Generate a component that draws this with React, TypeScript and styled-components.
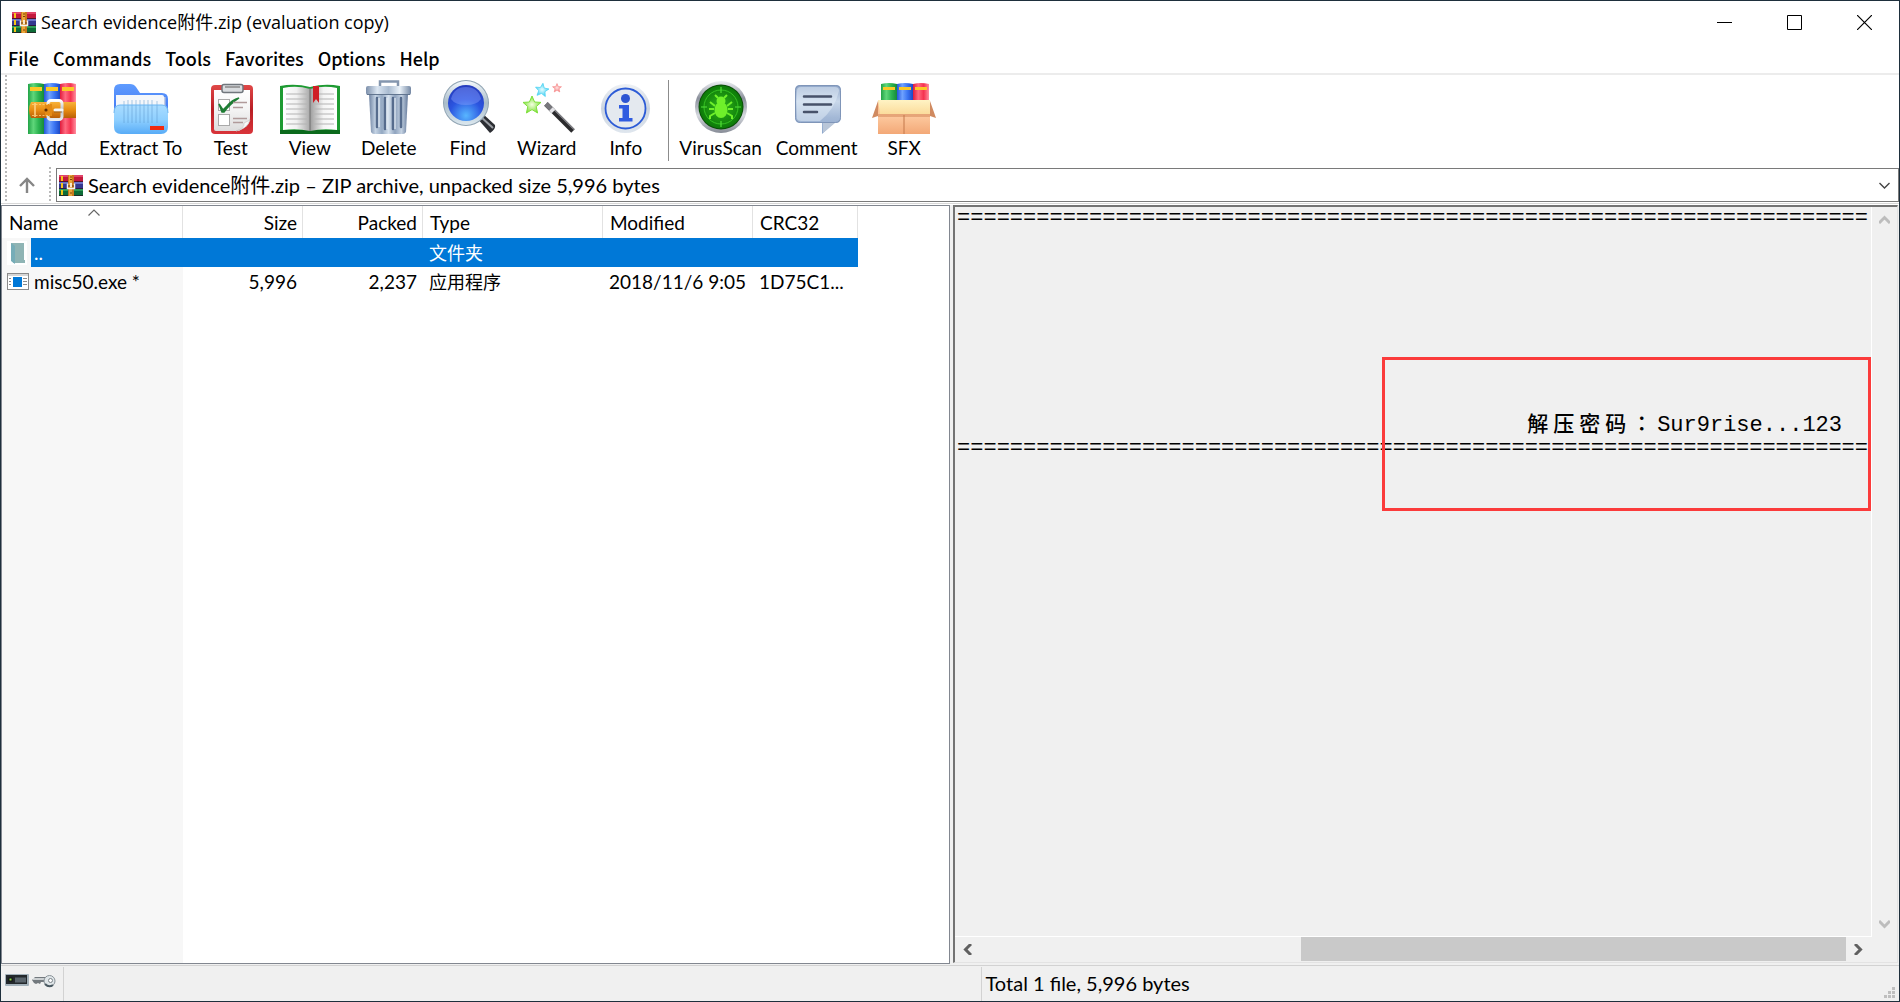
import React from "react";
import styled, { createGlobalStyle } from "styled-components";

const uiFont = `Lato, "Noto Sans CJK SC", sans-serif`;
const menuFont = `"Noto Sans CJK SC", sans-serif`;
const titleFont = `"Open Sans", "Noto Sans CJK SC", sans-serif`;
const monoFont = `"Liberation Mono", "Noto Sans CJK TC", monospace`;

const GlobalStyle = createGlobalStyle`
  * { box-sizing: border-box; }
  body { margin: 0; background: #fff; color: #000; }
  button, select { font: inherit; color: inherit; background: none; border: 0; margin: 0; padding: 0; }
  svg { display: block; flex: none; }
`;

const Window = styled.div`
  display: flex;
  flex-direction: column;
  min-height: 100vh;
  border: 1px solid #1e2f3c;
  background: #fff;
  font-family: ${uiFont};
  font-size: 19px;
`;

const TitleBar = styled.header`
  display: flex;
  align-items: center;
  height: 43px;
  padding-left: 11px;
`;

const Title = styled.h1`
  flex: 1;
  margin: 0;
  padding: 0 0 9px 5px;
  font: 400 18px/26px ${titleFont};
  align-self: flex-end;
`;

const WindowButton = styled.button`
  display: flex;
  align-items: center;
  justify-content: center;
  width: 70px;
  height: 43px;
`;

const MenuBar = styled.nav`
  display: flex;
  height: 31px;
  border-bottom: 2px solid #ececec;
  font: 500 18px/29px ${menuFont};
`;

const MenuItem = styled.button`
  padding: 0 7px;
  height: 29px;
`;

const Rebar = styled.div`
  display: flex;
  padding-left: 4px;
  border-bottom: 1px solid #d8d8d8;
  margin-bottom: 1px;
`;

const Grip = styled.div`
  flex: none;
  width: 2px;
  background: repeating-linear-gradient(#b9b9b9 0 2px, #fff 2px 4px);
`;

const Bands = styled.div`
  flex: 1;
  min-width: 0;
  display: flex;
  flex-direction: column;
`;

const Toolbar = styled.div`
  display: flex;
  align-items: flex-start;
  padding: 5px 4px 6px;
`;

const ToolGroup = styled.div<{ $pad: number }>`
  display: flex;
  button { padding: 0 ${(p) => p.$pad}px; }
`;

const ToolButton = styled.button`
  display: flex;
  flex-direction: column;
  align-items: center;
  gap: 1px;
  min-width: 79px;
  line-height: 26px;
  white-space: nowrap;

  svg { margin: 0 -4px; }
`;

const ToolSeparator = styled.div`
  width: 1px;
  height: 81px;
  margin: 0 3px;
  background: #8c8c8c;
`;

const AddressBand = styled.div`
  display: flex;
  height: 36px;
`;

const UpButton = styled.button`
  display: flex;
  align-items: center;
  justify-content: center;
  width: 42px;
  padding-right: 2px;
`;

const AddressBox = styled.div`
  position: relative;
  flex: 1;
  display: flex;
  align-items: center;
  margin: 1px 0 1px 5px;
  padding-left: 2px;
  border: 1px solid #7a7a7a;
`;

const AddressSelect = styled.select`
  flex: 1;
  height: 32px;
  padding-left: 5px;
  appearance: none;
  font: 400 20px/26px ${uiFont};
`;

const SelectArrow = styled.span`
  position: absolute;
  right: 8px;
  pointer-events: none;
`;

const Panes = styled.main`
  flex: 1;
  display: grid;
  grid-template-columns: minmax(0, 950fr) minmax(0, 945fr);
  gap: 3px;
  background: #f0f0f0;
  padding: 0 1px 1px 0;
`;

const FilePane = styled.section`
  border: 1px solid #828790;
  background: linear-gradient(to right, #f7f7f7 181px, #fff 181px);
`;

const HeaderStrip = styled.div`
  background: linear-gradient(#fff 32px, transparent 32px);
`;

const FileTable = styled.table`
  table-layout: fixed;
  width: 856px;
  border-collapse: separate;
  border-spacing: 0;
`;

const HeadCell = styled.th<{ $width: number; $right?: boolean }>`
  position: relative;
  width: ${(p) => p.$width}px;
  height: 32px;
  padding: 0 5px 0 7px;
  border-right: 1px solid #e2e2e2;
  font-weight: 400;
  text-align: ${(p) => (p.$right ? "right" : "left")};
`;

const SortMark = styled.span`
  position: absolute;
  top: 3px;
  left: 86px;
`;

const FileRow = styled.tr<{ $selected?: boolean }>`
  color: ${(p) => (p.$selected ? "#fff" : "#000")};
  td + td, td:first-child span {
    background: ${(p) => (p.$selected ? "#0078d7" : "transparent")};
  }
`;

const Cell = styled.td<{ $right?: boolean }>`
  height: 29px;
  padding: 0 6px;
  overflow: hidden;
  white-space: nowrap;
  line-height: 28px;
  text-align: ${(p) => (p.$right ? "right" : "left")};
`;

const TypeCell = styled(Cell)`
  font-size: 18px;
`;

const NameCell = styled.td`
  height: 29px;
  padding: 0;
`;

const NameBox = styled.div`
  display: flex;
  align-items: center;
`;

const IconSlot = styled.i`
  display: flex;
  width: 29px;
  padding-left: 5px;
`;

const NameText = styled.span`
  flex: 1;
  padding-left: 3px;
  line-height: 29px;
`;

const CommentPane = styled.section`
  display: grid;
  grid-template-columns: minmax(0, 1fr) 25px;
  grid-template-rows: minmax(0, 1fr) 25px;
  border-style: solid;
  border-width: 2px 1px 1px 2px;
  border-color: #737373 #e3e3e3 #e3e3e3 #737373;
  margin-bottom: 1px;
  background: #f0f0f0;
`;

const CommentView = styled.div`
  position: relative;
  display: flex;
  flex-direction: column;
  align-items: flex-end;
  overflow: hidden;
  border-right: 1px solid #fff;
  border-bottom: 1px solid #fff;
  padding: 0 3px 0 0;
  font: 400 22px/23px ${monoFont};
`;

const CommentLine = styled.div<{ $inset?: boolean }>`
  flex: none;
  display: flex;
  align-items: baseline;
  height: 23px;
  padding-right: ${(p) => (p.$inset ? 26 : 0)}px;
  white-space: pre;
`;

const WideGlyph = styled.span`
  width: 26px;
  font-size: 21px;
  font-weight: 500;
`;

const Highlight = styled.div`
  position: absolute;
  top: 150px;
  right: 0;
  width: 489px;
  height: 154px;
  border: 3px solid #fb3b3b;
`;

const VScroll = styled.div`
  display: flex;
  flex-direction: column;
  justify-content: space-between;
  align-items: center;
`;

const HScroll = styled.div`
  display: flex;
  padding-right: 1px;
`;

const ScrollButton = styled.button`
  display: flex;
  align-items: center;
  justify-content: center;
  width: 25px;
  height: 25px;
`;

const Track = styled.div`
  flex: 1;
  display: flex;
  justify-content: flex-end;
`;

const Thumb = styled.div`
  width: 63%;
  height: 24px;
  background: #c9c9c9;
`;

const StatusBar = styled.footer`
  display: grid;
  grid-template-columns: 63px minmax(0, 917fr) minmax(0, 917fr);
  height: 36px;
  padding-top: 1px;
  border-top: 1px solid #d2d2d2;
  background: #f0f0f0;
  font-size: 20px;
  line-height: 33px;
`;

const StatusPart = styled.div<{ $divider?: boolean }>`
  display: flex;
  align-items: flex-start;
  gap: 3px;
  padding: 0 4px;
  border-right: ${(p) => (p.$divider ? "1px solid #d2d2d2" : "0")};
`;

const StatusIcon = styled.span`
  padding-top: 7px;
`;

const StatusText = styled.span`
  flex: 1;
`;

const Resizer = styled.span`
  align-self: flex-end;
`;

const Gradient = ({ id, stops, across }: { id: string; stops: string[]; across?: boolean }) => (
  <linearGradient id={id} x1="0" y1="0" x2={across ? 1 : 0} y2={across ? 0 : 1}>
    {stops.map((c, i) => (
      <stop key={i} offset={i / (stops.length - 1)} stopColor={c} />
    ))}
  </linearGradient>
);

const Picture = ({ children }: { children: React.ReactNode }) => (
  <svg width="64" height="54" viewBox="0 0 64 54" aria-hidden="true">{children}</svg>
);

const ArchiveIcon = () => (
  <svg width="24" height="21" viewBox="0 0 24 21" aria-hidden="true">
    <rect width="24" height="7" fill="#c2183c" />
    <rect width="24" height="2" fill="#e0456a" />
    <rect y="7" width="24" height="7" fill="#34378f" />
    <rect y="7" width="24" height="2" fill="#6b74c8" />
    <rect y="14" width="24" height="7" fill="#0d6b37" />
    <rect y="14" width="24" height="2" fill="#2f9c55" />
    <path d="M0 6.5h24M0 13.5h24M0 20.5h24" stroke="#2a1020" strokeOpacity=".7" />
    <rect x="2" y="1" width="2" height="5" fill="#f5c518" />
    <rect x="2" y="8" width="2" height="5" fill="#f5c518" />
    <rect x="2" y="15" width="2" height="5" fill="#f5c518" />
    <rect x="9" width="6" height="21" fill="#c9781c" />
    <rect x="10" width="3" height="21" fill="#e9a73a" />
    <path d="M11 2h2M11 4.500h2M11 18h2" stroke="#7c4208" />
    <path d="M8.500 8.500v5h7v-5" fill="none" stroke="#f2f2f2" strokeWidth="1.500" />
    <path d="M12 8v4" stroke="#fff" strokeWidth="1.500" />
    <path d="M10 10v2M14 10v2" stroke="#6a3c14" />
  </svg>
);

const AddIcon = () => (
  <Picture>
    <defs>
      <Gradient id="ag" across stops={["#22a347", "#5fd67a", "#2bb350", "#178a39"]} />
      <Gradient id="ab" across stops={["#2456d8", "#6fa2ff", "#3a74f2", "#1d48c4"]} />
      <Gradient id="ar" across stops={["#e01b3c", "#ff6a80", "#f5324f", "#ff8fa0"]} />
      <Gradient id="ao" stops={["#f7b23a", "#e88c12", "#b95f06"]} />
      <Gradient id="as" stops={["#ffffff", "#b9bfc7", "#e9ecef"]} />
    </defs>
    <path d="M9 4q8-2 16 0v50H9z" fill="url(#ag)" />
    <path d="M25 4q8-2 16 0v50H25z" fill="url(#ab)" />
    <path d="M41 4q8-2 16 0v50H41z" fill="url(#ar)" />
    <path d="M11 9h12M27 9h12M43 9h12" stroke="#fbc926" strokeWidth="4" />
    <path d="M12 22h45v16H12q-4-8 0-16z" fill="url(#ao)" />
    <rect x="29" y="20.500" width="14" height="19" rx="3" fill="none" stroke="url(#as)" strokeWidth="3" />
    <path d="M26 24h7v12h-7z" fill="#e38a14" />
    <path d="M13 24.500h18M13 35.500h18" stroke="#ffd27a" strokeDasharray="2 1.500" strokeWidth=".8" />
    <circle cx="27" cy="30" r="1.600" fill="#5a2d05" />
    <path d="M16 23v14" stroke="#ffd58a" strokeWidth="1.500" />
    <path d="M36 30h7" stroke="#f4f6f8" strokeWidth="3" strokeLinecap="round" />
    <path d="M35 32h8" stroke="#8b5a22" strokeWidth=".8" />
  </Picture>
);

const ExtractIcon = () => (
  <Picture>
    <defs>
      <Gradient id="eb" stops={["#5f9cff", "#3769ec"]} />
      <Gradient id="ef" stops={["#a9dcff", "#8fd0ff", "#58acf7"]} />
    </defs>
    <path d="M5 10q0-6 6-6h10q4 0 6 3l4 6h22q6 0 6 6v25H5z" fill="url(#eb)" />
    <path d="M7 15h46q2 0 2 2v14H7z" fill="#f4f7fb" />
    <path d="M55 17h1.500v14H55z" fill="#c2cbe0" />
    <path d="M5 31q0-6 6-6h42q6 0 6 6v16q0 7-7 7H12q-7 0-7-7z" fill="url(#ef)" />
    <path d="M15 21v22M19 20v23M23 20v23M27 20v23M31 20v23M35 20v23M39 20v23M43 20v23M48 21v22" stroke="#5b93c9" strokeOpacity=".4" strokeWidth="1.200" />
    <path d="M5 33q0-8 6-8h42q6 0 6 8" fill="none" stroke="#6db6f2" />
    <rect x="41" y="46" width="14" height="4" fill="#f02a10" />
  </Picture>
);

const TestIcon = () => (
  <Picture>
    <defs>
      <Gradient id="tr" stops={["#e04848", "#b81e24", "#d9343a"]} />
      <Gradient id="tp" stops={["#ffffff", "#f3f3f3", "#dcdcdc"]} />
    </defs>
    <rect x="12" y="5" width="42" height="49" rx="4" fill="url(#tr)" />
    <path d="M15 10h36v28q0 10-14 13H17q-2 0-2-2z" fill="url(#tp)" />
    <path d="M51 40q-3 9-14 11q9-3 8-8z" fill="#fafafa" stroke="#c2c2c2" strokeWidth=".6" />
    <rect x="23" y="4.500" width="21" height="8" rx="2" fill="#d9dcdf" stroke="#70767c" strokeWidth="1.500" />
    <path d="M26 7h15" stroke="#888" strokeWidth="1.500" />
    <rect x="19.500" y="19.500" width="11" height="11" fill="#fff" stroke="#a9a9a9" />
    <rect x="19.500" y="34.500" width="11" height="11" fill="#fff" stroke="#a9a9a9" />
    <path d="M20 24l4 6 4-4q5-6 12-8q-9 6-15 14h-2z" fill="#1e7d34" stroke="#1e7d34" strokeWidth="1.500" />
    <path d="M34 22.500h14M34 27.500h10M34 38.500h14M34 42.500h10" stroke="#b09a9a" strokeWidth="1.300" />
  </Picture>
);

const ViewIcon = () => (
  <Picture>
    <defs>
      <Gradient id="vl" across stops={["#ffffff", "#f1f1f1", "#a9a9a9"]} />
      <Gradient id="vr" across stops={["#9d9d9d", "#f4f4f4", "#ffffff"]} />
    </defs>
    <path d="M2 6q15-3 30 1q15-4 30-1v48H2z" fill="#1d9a31" />
    <path d="M2 50h60v4H2z" fill="#0b6a1c" />
    <path d="M5 8q14-3 27 1v42q-13-3-27-1z" fill="url(#vl)" />
    <path d="M59 8q-14-3-27 1v42q13-3 27-1z" fill="url(#vr)" />
    <path d="M32 8v43" stroke="#707070" />
    {[14, 19, 24, 29, 34, 39, 44].map((y) => (
      <path key={y} d={`M8 ${y}h21M36 ${y}h20`} stroke="#b4b4b4" strokeWidth="1.200" />
    ))}
    <path d="M35 6h6v17l-3-4-3 4z" fill="#cf1f26" />
  </Picture>
);

const DeleteIcon = () => (
  <Picture>
    <defs>
      <Gradient id="dl" across stops={["#7d90ab", "#dbe6f2", "#a9bbd0", "#e9f1f8", "#7488a4"]} />
      <Gradient id="db" across stops={["#6f84a3", "#c4d3e4", "#93a8c2", "#d6e2ee", "#8fa3be", "#c4d2e2", "#64799a"]} />
    </defs>
    <path d="M23 7V1.500h18V7" fill="none" stroke="#8496ae" strokeWidth="2.500" />
    <path d="M12 14h39l-2 38q-1 2-3 2H17q-2 0-3-2z" fill="url(#db)" />
    <path d="M20 18v29M28 18v31M36 18v31M44 18v29" stroke="#566c8d" strokeWidth="2.500" strokeLinecap="round" />
    <path d="M22 18v29M30 18v31M38 18v31" stroke="#e7eff7" strokeWidth="1.200" />
    <rect x="9" y="6" width="45" height="9" rx="2" fill="url(#dl)" />
    <path d="M10 14.500h43" stroke="#61758f" />
  </Picture>
);

const FindIcon = () => (
  <Picture>
    <defs>
      <radialGradient id="fl" cx=".5" cy=".85" r=".9">
        <stop offset="0" stopColor="#58b6ff" />
        <stop offset=".5" stopColor="#2b55e0" />
        <stop offset="1" stopColor="#2438b8" />
      </radialGradient>
      <Gradient id="fr" stops={["#f4f9fc", "#a9bcc9", "#dce8ef"]} />
    </defs>
    <path d="M41 38l5-5 13 12q1 4-5 8z" fill="#2c2e33" />
    <path d="M44 36l13 12" stroke="#9a9da3" strokeWidth="2" />
    <circle cx="30" cy="23" r="23" fill="#8fa3b2" />
    <circle cx="30" cy="23" r="22" fill="url(#fr)" />
    <circle cx="30" cy="23" r="18" fill="url(#fl)" />
    <path d="M15 19q3-12 15-12t15 12q-4 6-15 6t-15-6z" fill="#8fa6ff" fillOpacity=".4" />
  </Picture>
);

const star = "M0-9 2.600-3 9-2.600 4.200 1.600 5.600 8 0 4.600-5.600 8-4.200 1.600-9-2.600-2.600-3z";

const WizardIcon = () => (
  <Picture>
    <defs>
      <radialGradient id="wg"><stop offset="0" stopColor="#f4ffdf" /><stop offset="1" stopColor="#7fe03c" /></radialGradient>
      <radialGradient id="wc"><stop offset="0" stopColor="#e3fcff" /><stop offset="1" stopColor="#4fd3f2" /></radialGradient>
      <radialGradient id="wr"><stop offset="0" stopColor="#ffe3e3" /><stop offset="1" stopColor="#f48080" /></radialGradient>
    </defs>
    <path d={star} transform="translate(17 25)" fill="url(#wg)" stroke="#7fe03c" />
    <path d={star} transform="translate(27 10) rotate(8) scale(.75)" fill="url(#wc)" stroke="#4fd3f2" />
    <path d={star} transform="translate(42 8) scale(.5)" fill="url(#wr)" stroke="#f48080" />
    <path d="M31 24l27 27" stroke="#2b2b2d" strokeWidth="5" />
    <path d="M32 22.500l27 27" stroke="#85858a" strokeWidth="1.200" />
    <path d="M31 24l7 7" stroke="#77777c" strokeWidth="5" />
    <path d="M36 29l2.500 2.500" stroke="#e4e4e8" strokeWidth="5" />
  </Picture>
);

const InfoIcon = () => (
  <Picture>
    <defs><Gradient id="ir" stops={["#eef1f5", "#ccd5e0", "#dfe6ee"]} /></defs>
    <circle cx="31.500" cy="28.500" r="24.500" fill="url(#ir)" />
    <circle cx="31.500" cy="28.500" r="20" fill="#e4e9ef" stroke="#2c5bd6" strokeWidth="1.800" />
    <circle cx="31.500" cy="18.500" r="4.500" fill="#2d55d2" />
    <path d="M25 25h10v13h3.500v3.500H25V38h3.500v-9.500H25z" fill="#2f5be0" />
  </Picture>
);

const VirusIcon = () => (
  <Picture>
    <defs>
      <Gradient id="um" stops={["#eef0f4", "#8b909c", "#d5d8de", "#868b96"]} />
      <radialGradient id="ug"><stop offset="0" stopColor="#2fb41c" /><stop offset="1" stopColor="#0c7a08" /></radialGradient>
    </defs>
    <circle cx="32" cy="27" r="26" fill="url(#um)" />
    <circle cx="32" cy="27" r="22.500" fill="#0a4d08" />
    <circle cx="32" cy="27" r="21.500" fill="url(#ug)" />
    <circle cx="32" cy="27" r="17" fill="none" stroke="#3fd028" strokeWidth=".8" />
    <path d="M32 7v6M32 41v6M12 27h6M46 27h6" stroke="#52e038" strokeWidth="1.200" />
    <ellipse cx="32" cy="30" rx="6.500" ry="8" fill="#6ff02a" />
    <circle cx="32" cy="21" r="4.500" fill="#6ff02a" />
    <path d="M29 18l-3-3M35 18l3-3M26 26l-5-4M38 26l5-4M25 29h-5M39 29h5M26 33l-5 3v3M38 33l5 3v3" fill="none" stroke="#6ff02a" strokeWidth="2" />
  </Picture>
);

const CommentIcon = () => (
  <Picture>
    <defs><Gradient id="cb" stops={["#8ea5c8", "#c9d8ea", "#a3b8d6", "#8fa8cc"]} /></defs>
    <path d="M15 5h36q5 0 5 5v27q0 6-5 6h-2L37 54V43H15q-5 0-5-5V10q0-5 5-5z" fill="url(#cb)" />
    <path d="M12 39V11q0-4 4-4h34q4 0 4 4q-4 18-19 30H16q-3 0-4-2z" fill="#e4edf7" fillOpacity=".5" />
    <rect x="10.500" y="5.500" width="45" height="37" rx="5" fill="none" stroke="#7f95b8" />
    <path d="M38 43h12L38 53z" fill="#b9c6d8" />
    <path d="M19 16.500h27M19 24.500h27M19 32h13" stroke="#47526a" strokeWidth="2.500" strokeLinecap="round" />
  </Picture>
);

const SfxIcon = () => (
  <Picture>
    <defs>
      <Gradient id="sb" stops={["#f7b98a", "#fcc79c", "#f3a877"]} />
      <Gradient id="sf" stops={["#fff3c4", "#fbdc9c"]} />
    </defs>
    <path d="M9 4q8-2 16 0v20H9z" fill="url(#ag)" />
    <path d="M25 4q8-2 16 0v20H25z" fill="url(#ab)" />
    <path d="M41 4q8-2 16 0v20H41z" fill="url(#ar)" />
    <path d="M11 8.500h12M27 8.500h12M43 8.500h12" stroke="#fbc926" strokeWidth="3" />
    <path d="M6 20h52v34H6z" fill="url(#sb)" />
    <path d="M6 34h52v3H6z" fill="#d98f62" fillOpacity=".6" />
    <path d="M6 20h52v14H8z" fill="url(#sf)" />
    <path d="M32 35v19" stroke="#c4784a" />
    <path d="M0 38l6-17v15zM64 38l-6-17v15z" fill="#d08a60" />
  </Picture>
);

const DriveIcon = () => (
  <svg width="24" height="12" viewBox="0 0 24 12" aria-hidden="true">
    <rect width="24" height="12" rx="1" fill="#a3b1ba" />
    <rect x="1" y="1" width="21" height="9" fill="#23282c" />
    <path d="M10 6h11" stroke="#5a646c" strokeWidth="5" />
    <rect x="4" y="4" width="3" height="3" fill="#8fe04a" stroke="#111" />
  </svg>
);

const KeyIcon = () => (
  <svg width="24" height="14" viewBox="0 0 24 14" aria-hidden="true">
    <path d="M0 6l3-3h11v5H9l-1 2-2-1-2 1-2-1z" fill="#73797e" />
    <path d="M1 5h13" stroke="#e8ecee" strokeWidth="1.500" />
    <circle cx="17.500" cy="7" r="5.500" fill="#dfe5e8" stroke="#8a9298" />
    <circle cx="18.500" cy="6.500" r="2" fill="#fff" stroke="#7d858b" />
    <path d="M13 10q4 4 8 1" fill="none" stroke="#4a5961" strokeWidth="2" />
  </svg>
);

const FolderIcon = () => (
  <svg width="20" height="24" viewBox="0 0 20 24" aria-hidden="true">
    <rect width="20" height="24" fill="#fff" />
    <path d="M4 2h13v17h1v3H6z" fill="#8fb4b4" />
    <path d="M4 2l4 3v18l-4-3z" fill="#76adb8" />
  </svg>
);

const ExeIcon = () => (
  <svg width="22" height="17" viewBox="0 0 22 17" aria-hidden="true">
    <rect x=".5" y=".5" width="21" height="16" fill="#fff" stroke="#8a8a8a" />
    <path d="M1 2h20" stroke="#c8c8c8" strokeWidth="1.500" />
    <rect x="6" y="4" width="9" height="10" fill="#0078d7" />
    <path d="M2 5.500h2M2 8.500h2M2 11.500h2M16 5.500h4M16 8.500h4M16 11.500h4" stroke="#8a8a8a" />
  </svg>
);

const Chevron = ({ d, w, h, color, weight }: { d: string; w: number; h: number; color: string; weight: number }) => (
  <svg width={w} height={h} viewBox={`0 0 ${w} ${h}`} aria-hidden="true">
    <path d={d} fill="none" stroke={color} strokeWidth={weight} />
  </svg>
);

const menus = ["File", "Commands", "Tools", "Favorites", "Options", "Help"];

const mainTools = [
  { label: "Add", Icon: AddIcon },
  { label: "Extract To", Icon: ExtractIcon },
  { label: "Test", Icon: TestIcon },
  { label: "View", Icon: ViewIcon },
  { label: "Delete", Icon: DeleteIcon },
  { label: "Find", Icon: FindIcon },
  { label: "Wizard", Icon: WizardIcon },
  { label: "Info", Icon: InfoIcon },
];

const extraTools = [
  { label: "VirusScan", Icon: VirusIcon },
  { label: "Comment", Icon: CommentIcon },
  { label: "SFX", Icon: SfxIcon },
];

const rule = "=".repeat(69);
const blanks = Array.from({ length: 8 }, (_, i) => i);

export default function App() {
  return (
    <Window>
      <GlobalStyle />
      <TitleBar>
        <ArchiveIcon />
        <Title>Search evidence附件.zip (evaluation copy)</Title>
        <WindowButton aria-label="Minimize">
          <Chevron w={15} h={15} d="M0 7.500h15" color="#000" weight={1} />
        </WindowButton>
        <WindowButton aria-label="Maximize">
          <Chevron w={15} h={15} d="M.5.5h14v14H.5z" color="#000" weight={1} />
        </WindowButton>
        <WindowButton aria-label="Close">
          <Chevron w={15} h={15} d="M0 0l15 15M15 0L0 15" color="#000" weight={1.2} />
        </WindowButton>
      </TitleBar>
      <MenuBar>
        {menus.map((m) => (
          <MenuItem key={m}>{m}</MenuItem>
        ))}
      </MenuBar>
      <Rebar>
        <Grip />
        <Bands>
          <Toolbar role="toolbar">
            <ToolGroup $pad={9}>
              {mainTools.map(({ label, Icon }) => (
                <ToolButton key={label}><Icon />{label}</ToolButton>
              ))}
            </ToolGroup>
            <ToolSeparator />
            <ToolGroup $pad={7}>
              {extraTools.map(({ label, Icon }) => (
                <ToolButton key={label}><Icon />{label}</ToolButton>
              ))}
            </ToolGroup>
          </Toolbar>
          <AddressBand>
            <UpButton aria-label="Up one level">
              <Chevron w={16} h={16} d="M8 16V2M1 9l7-7 7 7" color="#868686" weight={2.4} />
            </UpButton>
            <Grip />
            <AddressBox>
              <ArchiveIcon />
              <AddressSelect aria-label="Archive path">
                <option>Search evidence附件.zip – ZIP archive, unpacked size 5,996 bytes</option>
              </AddressSelect>
              <SelectArrow>
                <Chevron w={11} h={7} d="M.5 1l5 5 5-5" color="#444" weight={1.4} />
              </SelectArrow>
            </AddressBox>
          </AddressBand>
        </Bands>
      </Rebar>
      <Panes>
        <FilePane>
          <HeaderStrip>
            <FileTable>
              <thead>
                <tr>
                  <HeadCell $width={181}>
                    Name
                    <SortMark><Chevron w={12} h={7} d="M.5 6.500L6 1l5.500 5.500" color="#666" weight={1.2} /></SortMark>
                  </HeadCell>
                  <HeadCell $width={120} $right>Size</HeadCell>
                  <HeadCell $width={120} $right>Packed</HeadCell>
                  <HeadCell $width={180}>Type</HeadCell>
                  <HeadCell $width={150}>Modified</HeadCell>
                  <HeadCell $width={105}>CRC32</HeadCell>
                </tr>
              </thead>
              <tbody>
                <FileRow $selected>
                  <NameCell><NameBox><IconSlot><FolderIcon /></IconSlot><NameText>..</NameText></NameBox></NameCell>
                  <Cell /><Cell /><TypeCell>文件夹</TypeCell><Cell /><Cell />
                </FileRow>
                <FileRow>
                  <NameCell><NameBox><IconSlot><ExeIcon /></IconSlot><NameText>misc50.exe *</NameText></NameBox></NameCell>
                  <Cell $right>5,996</Cell>
                  <Cell $right>2,237</Cell>
                  <TypeCell>应用程序</TypeCell>
                  <Cell>2018/11/6 9:05</Cell>
                  <Cell>1D75C1...</Cell>
                </FileRow>
              </tbody>
            </FileTable>
          </HeaderStrip>
        </FilePane>
        <CommentPane aria-label="Archive comment">
          <CommentView>
            <CommentLine>{rule}</CommentLine>
            {blanks.map((n) => <CommentLine key={n} />)}
            <CommentLine $inset>
              {[..."解压密码："].map((c) => <WideGlyph key={c}>{c}</WideGlyph>)}
              Sur9rise...123
            </CommentLine>
            <CommentLine>{rule}</CommentLine>
            <Highlight />
          </CommentView>
          <VScroll>
            <ScrollButton aria-label="Scroll up"><Chevron w={11} h={9} d="M0 8l5.500-5.500L11 8" color="#bdbdbd" weight={3} /></ScrollButton>
            <ScrollButton aria-label="Scroll down"><Chevron w={11} h={9} d="M0 1l5.500 5.500L11 1" color="#bdbdbd" weight={3} /></ScrollButton>
          </VScroll>
          <HScroll>
            <ScrollButton aria-label="Scroll left"><Chevron w={9} h={11} d="M8 0L2.500 5.500 8 11" color="#606060" weight={3} /></ScrollButton>
            <Track><Thumb /></Track>
            <ScrollButton aria-label="Scroll right"><Chevron w={9} h={11} d="M1 0l5.500 5.500L1 11" color="#606060" weight={3} /></ScrollButton>
          </HScroll>
        </CommentPane>
      </Panes>
      <StatusBar>
        <StatusPart $divider>
          <StatusIcon><DriveIcon /></StatusIcon>
          <StatusIcon><KeyIcon /></StatusIcon>
        </StatusPart>
        <StatusPart $divider />
        <StatusPart>
          <StatusText>Total 1 file, 5,996 bytes</StatusText>
          <Resizer>
            <svg width="11" height="14" viewBox="0 0 11 14" aria-hidden="true">
              <path d="M8 0h3v3H8zM4 4h3v3H4zM8 4h3v3H8zM0 8h3v3H0zM4 8h3v3H4zM8 8h3v3H8z" fill="#bfbfbf" />
            </svg>
          </Resizer>
        </StatusPart>
      </StatusBar>
    </Window>
  );
}
